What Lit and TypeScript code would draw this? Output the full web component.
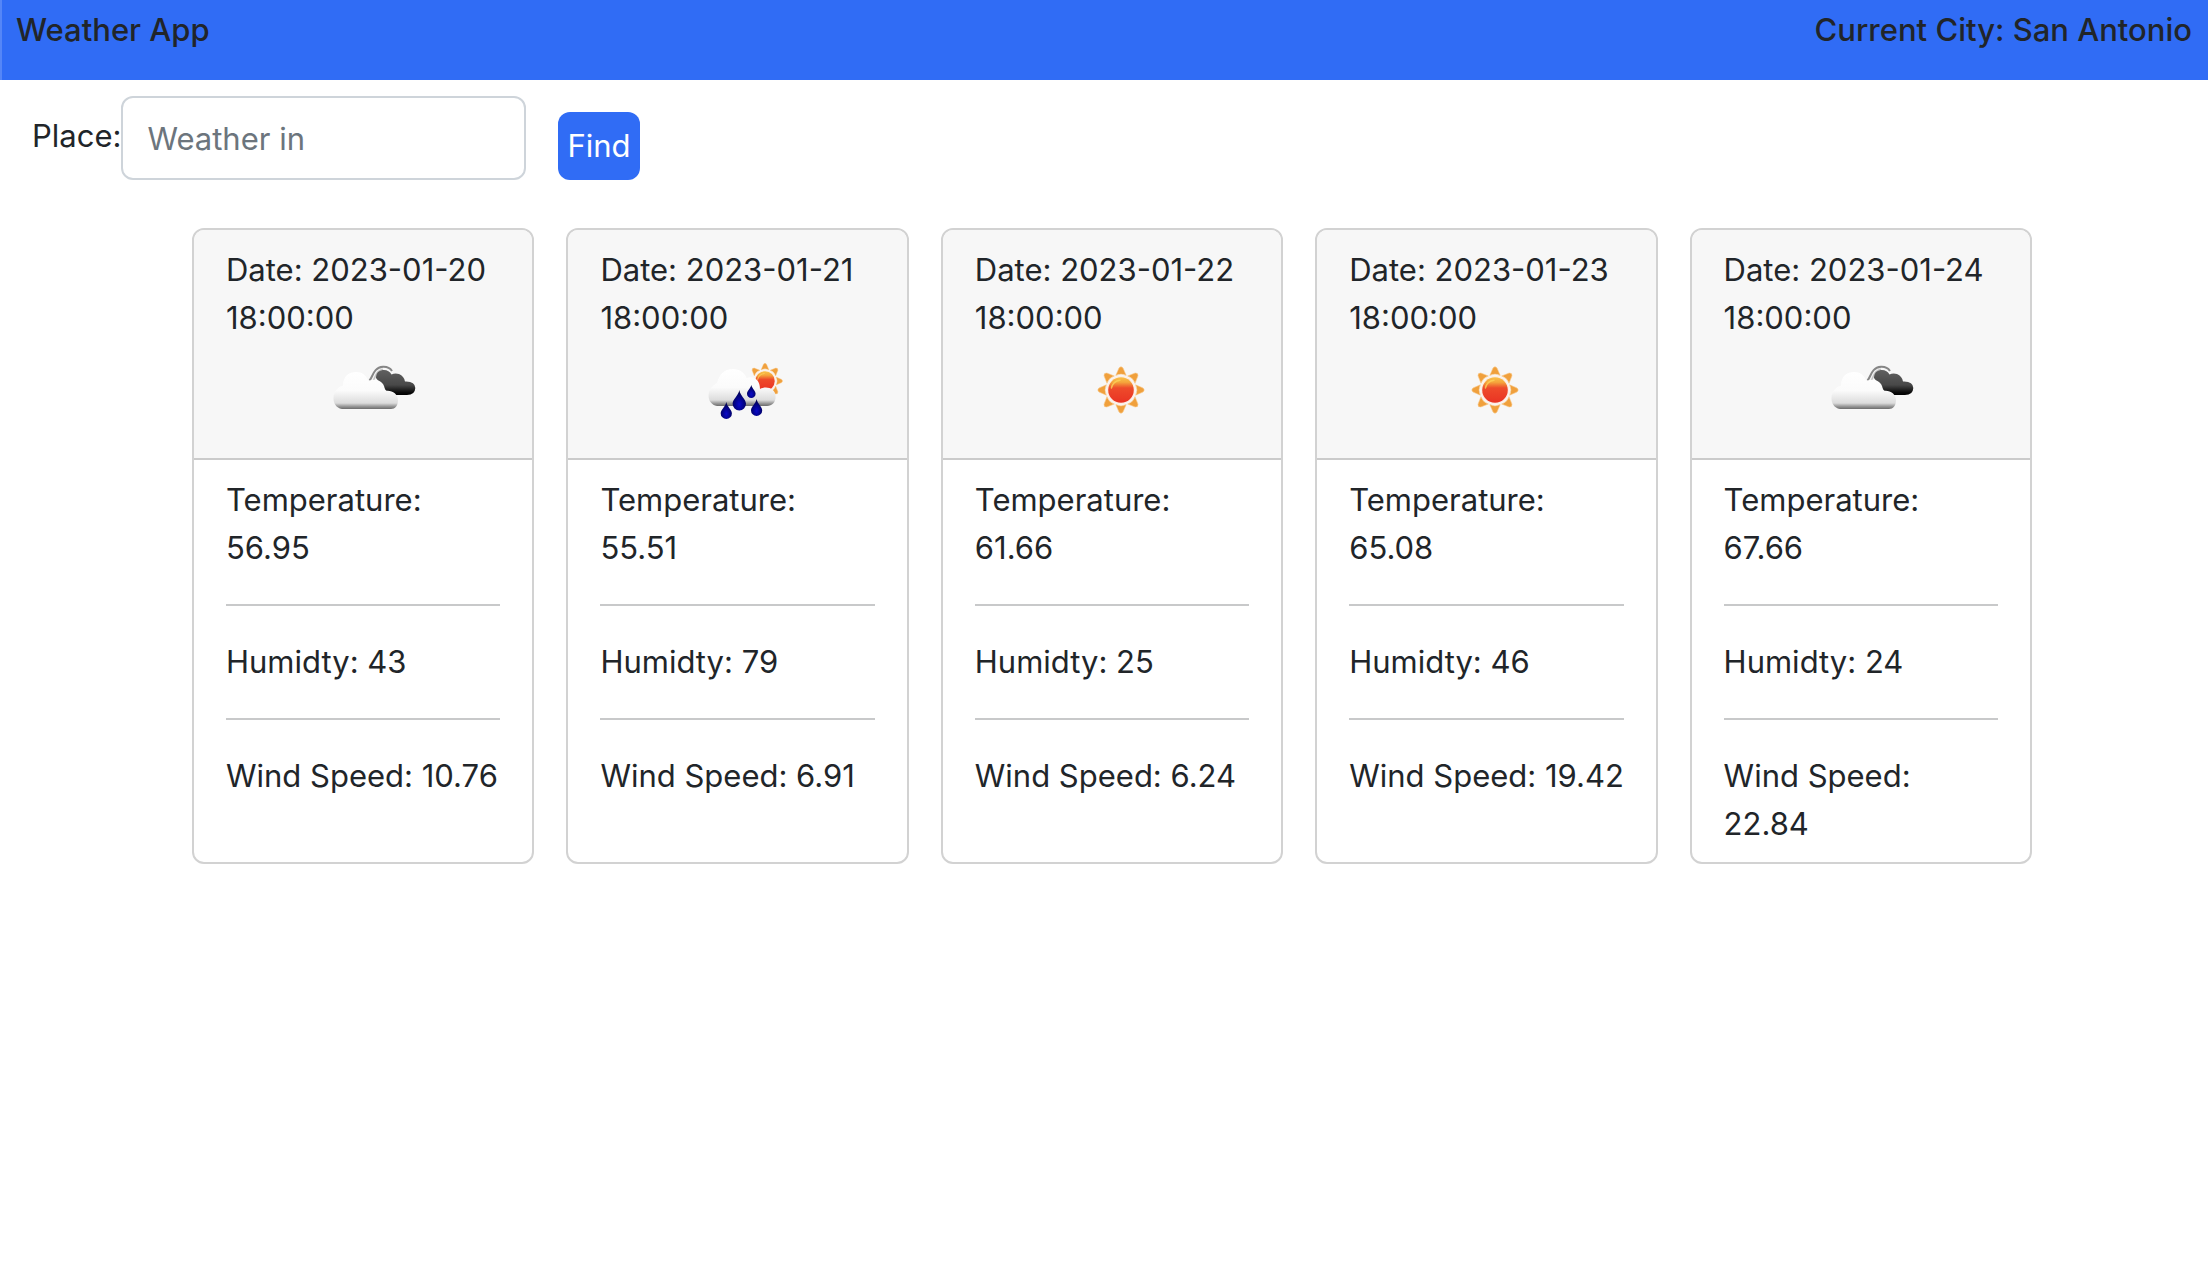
import { LitElement, html, css, svg } from "lit";
import { customElement, property, state } from "lit/decorators.js";

type Sky = "clouds" | "rain" | "clear";

interface Forecast {
  date: string;
  sky: Sky;
  temperature: string;
  humidity: string;
  wind: string;
}

const FORECASTS: Forecast[] = [
  { date: "2023-01-20 18:00:00", sky: "clouds", temperature: "56.95", humidity: "43", wind: "10.76" },
  { date: "2023-01-21 18:00:00", sky: "rain", temperature: "55.51", humidity: "79", wind: "6.91" },
  { date: "2023-01-22 18:00:00", sky: "clear", temperature: "61.66", humidity: "25", wind: "6.24" },
  { date: "2023-01-23 18:00:00", sky: "clear", temperature: "65.08", humidity: "46", wind: "19.42" },
  { date: "2023-01-24 18:00:00", sky: "clouds", temperature: "67.66", humidity: "24", wind: "22.84" },
];

const ray = (angle: number) =>
  svg`<path d="M-5.2 -14.6 Q0 -17.4 5.2 -14.6 L2 -22 Q0 -24.4 -2 -22 Z" transform="rotate(${angle})" />`;

const sun = (angles: number[]) => svg`
  <g fill="#f0a03c" stroke="#f8c888" stroke-width="0.6">${angles.map(ray)}</g>
  <circle r="14.2" fill="#fdeee4" />
  <circle r="12.8" fill="url(#sun)" />
  <path d="M-9.6 -2 A10 10 0 0 1 -1 -9.8" fill="none" stroke="#fbd25a" stroke-width="1.4" stroke-linecap="round" opacity="0.8" />`;

const drop = (x: number, top: number, height: number, r: number) => svg`
  <path
    d="M${x} ${top} C${x + 1} ${top + height * 0.3} ${x + r} ${top + height * 0.45} ${x + r} ${top + height - r}
       A${r} ${r} 0 0 1 ${x - r} ${top + height - r}
       C${x - r} ${top + height * 0.45} ${x - 1} ${top + height * 0.3} ${x} ${top} Z"
    fill="url(#drop)" />`;

const PICTURES = {
  clear: svg`<g transform="translate(50 48)">${sun([0, 45, 90, 135, 180, 225, 270, 315])}</g>`,
  clouds: svg`
    <path d="M47.500 38.500 C51 35 51 25.500 61 24.800 Q67 24.500 70 29" fill="none" stroke="#868686" stroke-width="2" />
    <path d="M51 39 C54 34 54 29 61 27.200" fill="none" stroke="#c4c4c4" stroke-width="1.600" />
    <path d="M54 36 C54 30 58 28 62 28 Q67 28 69.500 32.500 Q73 30.600 77 32 Q82 34 83 39.500 Q93 39 93.300 46 Q93 53 85 53 L68 53 L62 46 Z" fill="url(#dark)" />
    <path d="M20 67 C14 66 11.500 61 11.500 56.500 C11.500 49 16 45 21 43.500 C21 34 27 30 34 30 C40 30 44 33 46.500 39 C55 35.500 63 40 63 49 C69 47.500 76 51 76 58.500 C76 63.500 73 67 69 67 Z" fill="url(#cloud)" />`,
  rain: svg`
    <g transform="translate(69 39) scale(0.76)">${sun([0, 45, 90, 135, 315])}</g>
    <path d="M21 64 C15.500 63 12.600 58.500 12.600 54 C12.600 47 17 43 21 41 C23 33 28 27 37 27 C44 27 49 31 50.500 36 C58 33.500 64 38 64 47 C70 43.500 79.600 46 79.600 54.500 C79.600 60.500 76 64 71 64 Z" fill="url(#cloud)" />
    ${drop(43.300, 48, 20.500, 6.700)}
    ${drop(55.300, 43, 13, 4.300)}
    ${drop(30.300, 60, 17, 5.600)}
    ${drop(60.600, 57, 17, 5.600)}`,
};

const LABELS: Record<Sky, string> = {
  clear: "Clear sky",
  clouds: "Broken clouds",
  rain: "Rain showers",
};

@customElement("sky-icon")
export class SkyIcon extends LitElement {
  static styles = css`
    :host {
      display: block;
      width: 100px;
      height: 100px;
    }
    .picture {
      display: block;
      width: 100%;
      height: 100%;
      filter: blur(0.6px);
    }
  `;

  @property() sky: Sky = "clear";

  render() {
    return html`
      <svg class="picture" viewBox="0 0 100 100" role="img" aria-label=${LABELS[this.sky]}>
        <defs>
          <linearGradient id="sun" x1="0" y1="0" x2="0" y2="1">
            <stop offset="0" stop-color="#f9c24a" />
            <stop offset="0.2" stop-color="#f5a53c" />
            <stop offset="0.42" stop-color="#ee4b2b" />
            <stop offset="1" stop-color="#e93323" />
          </linearGradient>
          <linearGradient id="cloud" x1="0" y1="0" x2="0" y2="1">
            <stop offset="0" stop-color="#ffffff" />
            <stop offset="0.5" stop-color="#fbfbfb" />
            <stop offset="0.84" stop-color="#dcdcdc" />
            <stop offset="0.93" stop-color="#989898" />
            <stop offset="1" stop-color="#6c6c6c" />
          </linearGradient>
          <linearGradient id="dark" x1="0" y1="0" x2="0" y2="1">
            <stop offset="0" stop-color="#606060" />
            <stop offset="0.6" stop-color="#484848" />
            <stop offset="0.9" stop-color="#0a0a0a" />
            <stop offset="1" stop-color="#000000" />
          </linearGradient>
          <radialGradient id="drop" cx="0.5" cy="0.7" r="0.6">
            <stop offset="0" stop-color="#0a0ac8" />
            <stop offset="0.4" stop-color="#04049c" />
            <stop offset="1" stop-color="#020250" />
          </radialGradient>
        </defs>
        ${PICTURES[this.sky]}
      </svg>
    `;
  }
}

@customElement("forecast-card")
export class ForecastCard extends LitElement {
  static styles = css`
    :host {
      display: flex;
      flex-direction: column;
      box-sizing: border-box;
      min-width: 0;
      border: 2px solid #d2d2d2;
      border-radius: 12px;
      background: #fff;
      overflow: hidden;
    }
    .head {
      padding: 16px 28px 16px 32px;
      background: #f7f7f7;
      border-bottom: 2px solid #cbcbcb;
    }
    .icon {
      margin-left: 96px;
    }
    .body {
      padding: 16px 28px 14px 32px;
    }
    .line {
      margin: 0;
    }
    .rule {
      margin: 32px 4px 32px 0;
      border: 0;
      border-top: 2px solid #c8c9ca;
    }
  `;

  @property({ attribute: false }) forecast!: Forecast;

  render() {
    const { date, sky, temperature, humidity, wind } = this.forecast;
    return html`
      <div class="head">
        <p class="line">${`Date: ${date}`}</p>
        <sky-icon class="icon" .sky=${sky}></sky-icon>
      </div>
      <div class="body">
        <p class="line">${`Temperature: ${temperature}`}</p>
        <hr class="rule" />
        <p class="line">${`Humidty: ${humidity}`}</p>
        <hr class="rule" />
        <p class="line">${`Wind Speed: ${wind}`}</p>
      </div>
    `;
  }
}

@customElement("app-root")
export class AppRoot extends LitElement {
  static styles = css`
    :host {
      display: block;
      min-height: 100vh;
      background: #fff;
      color: #212529;
      font-family: Inter, "Liberation Sans", sans-serif;
      font-size: 31px;
      line-height: 48px;
    }
    .bar {
      display: flex;
      justify-content: space-between;
      box-sizing: border-box;
      min-height: 80px;
      padding: 6px 16px 0 14px;
      border-left: 2px solid #5586f7;
      background: #306cf5;
    }
    .title {
      margin: 0;
      font-size: inherit;
      font-weight: 500;
    }
    .search {
      display: flex;
      align-items: flex-end;
      padding: 16px 32px 48px;
    }
    .label {
      padding-bottom: 20px;
    }
    .place {
      box-sizing: border-box;
      width: 405px;
      height: 84px;
      margin-right: 32px;
      padding: 0 24px;
      border: 2px solid #ced4da;
      border-radius: 12px;
      background: #fff;
      color: inherit;
      font: inherit;
    }
    .place::placeholder {
      color: #6c757d;
      opacity: 1;
    }
    .find {
      height: 68px;
      padding: 0 9px;
      border: 0;
      border-radius: 12px;
      background: #306cf5;
      color: #fff;
      font: inherit;
      cursor: pointer;
    }
    .cards {
      display: grid;
      grid-template-columns: repeat(5, minmax(0, 1fr));
      gap: 32px;
      padding: 0 176px 48px 192px;
    }
  `;

  @state() private city = "San Antonio";
  @state() private place = "";

  private onInput(event: Event) {
    this.place = (event.target as HTMLInputElement).value;
  }

  private onSubmit(event: Event) {
    event.preventDefault();
    if (this.place.trim()) this.city = this.place.trim();
  }

  render() {
    return html`
      <header class="bar">
        <h1 class="title">Weather App</h1>
        <h2 class="title">Current City: ${this.city}</h2>
      </header>
      <main>
        <form class="search" @submit=${this.onSubmit}>
          <label class="label" for="place">Place:</label>
          <input class="place" id="place" type="text" placeholder="Weather in" .value=${this.place} @input=${this.onInput} />
          <button class="find" type="submit">Find</button>
        </form>
        <section class="cards">
          ${FORECASTS.map((f) => html`<forecast-card .forecast=${f}></forecast-card>`)}
        </section>
      </main>
    `;
  }
}
